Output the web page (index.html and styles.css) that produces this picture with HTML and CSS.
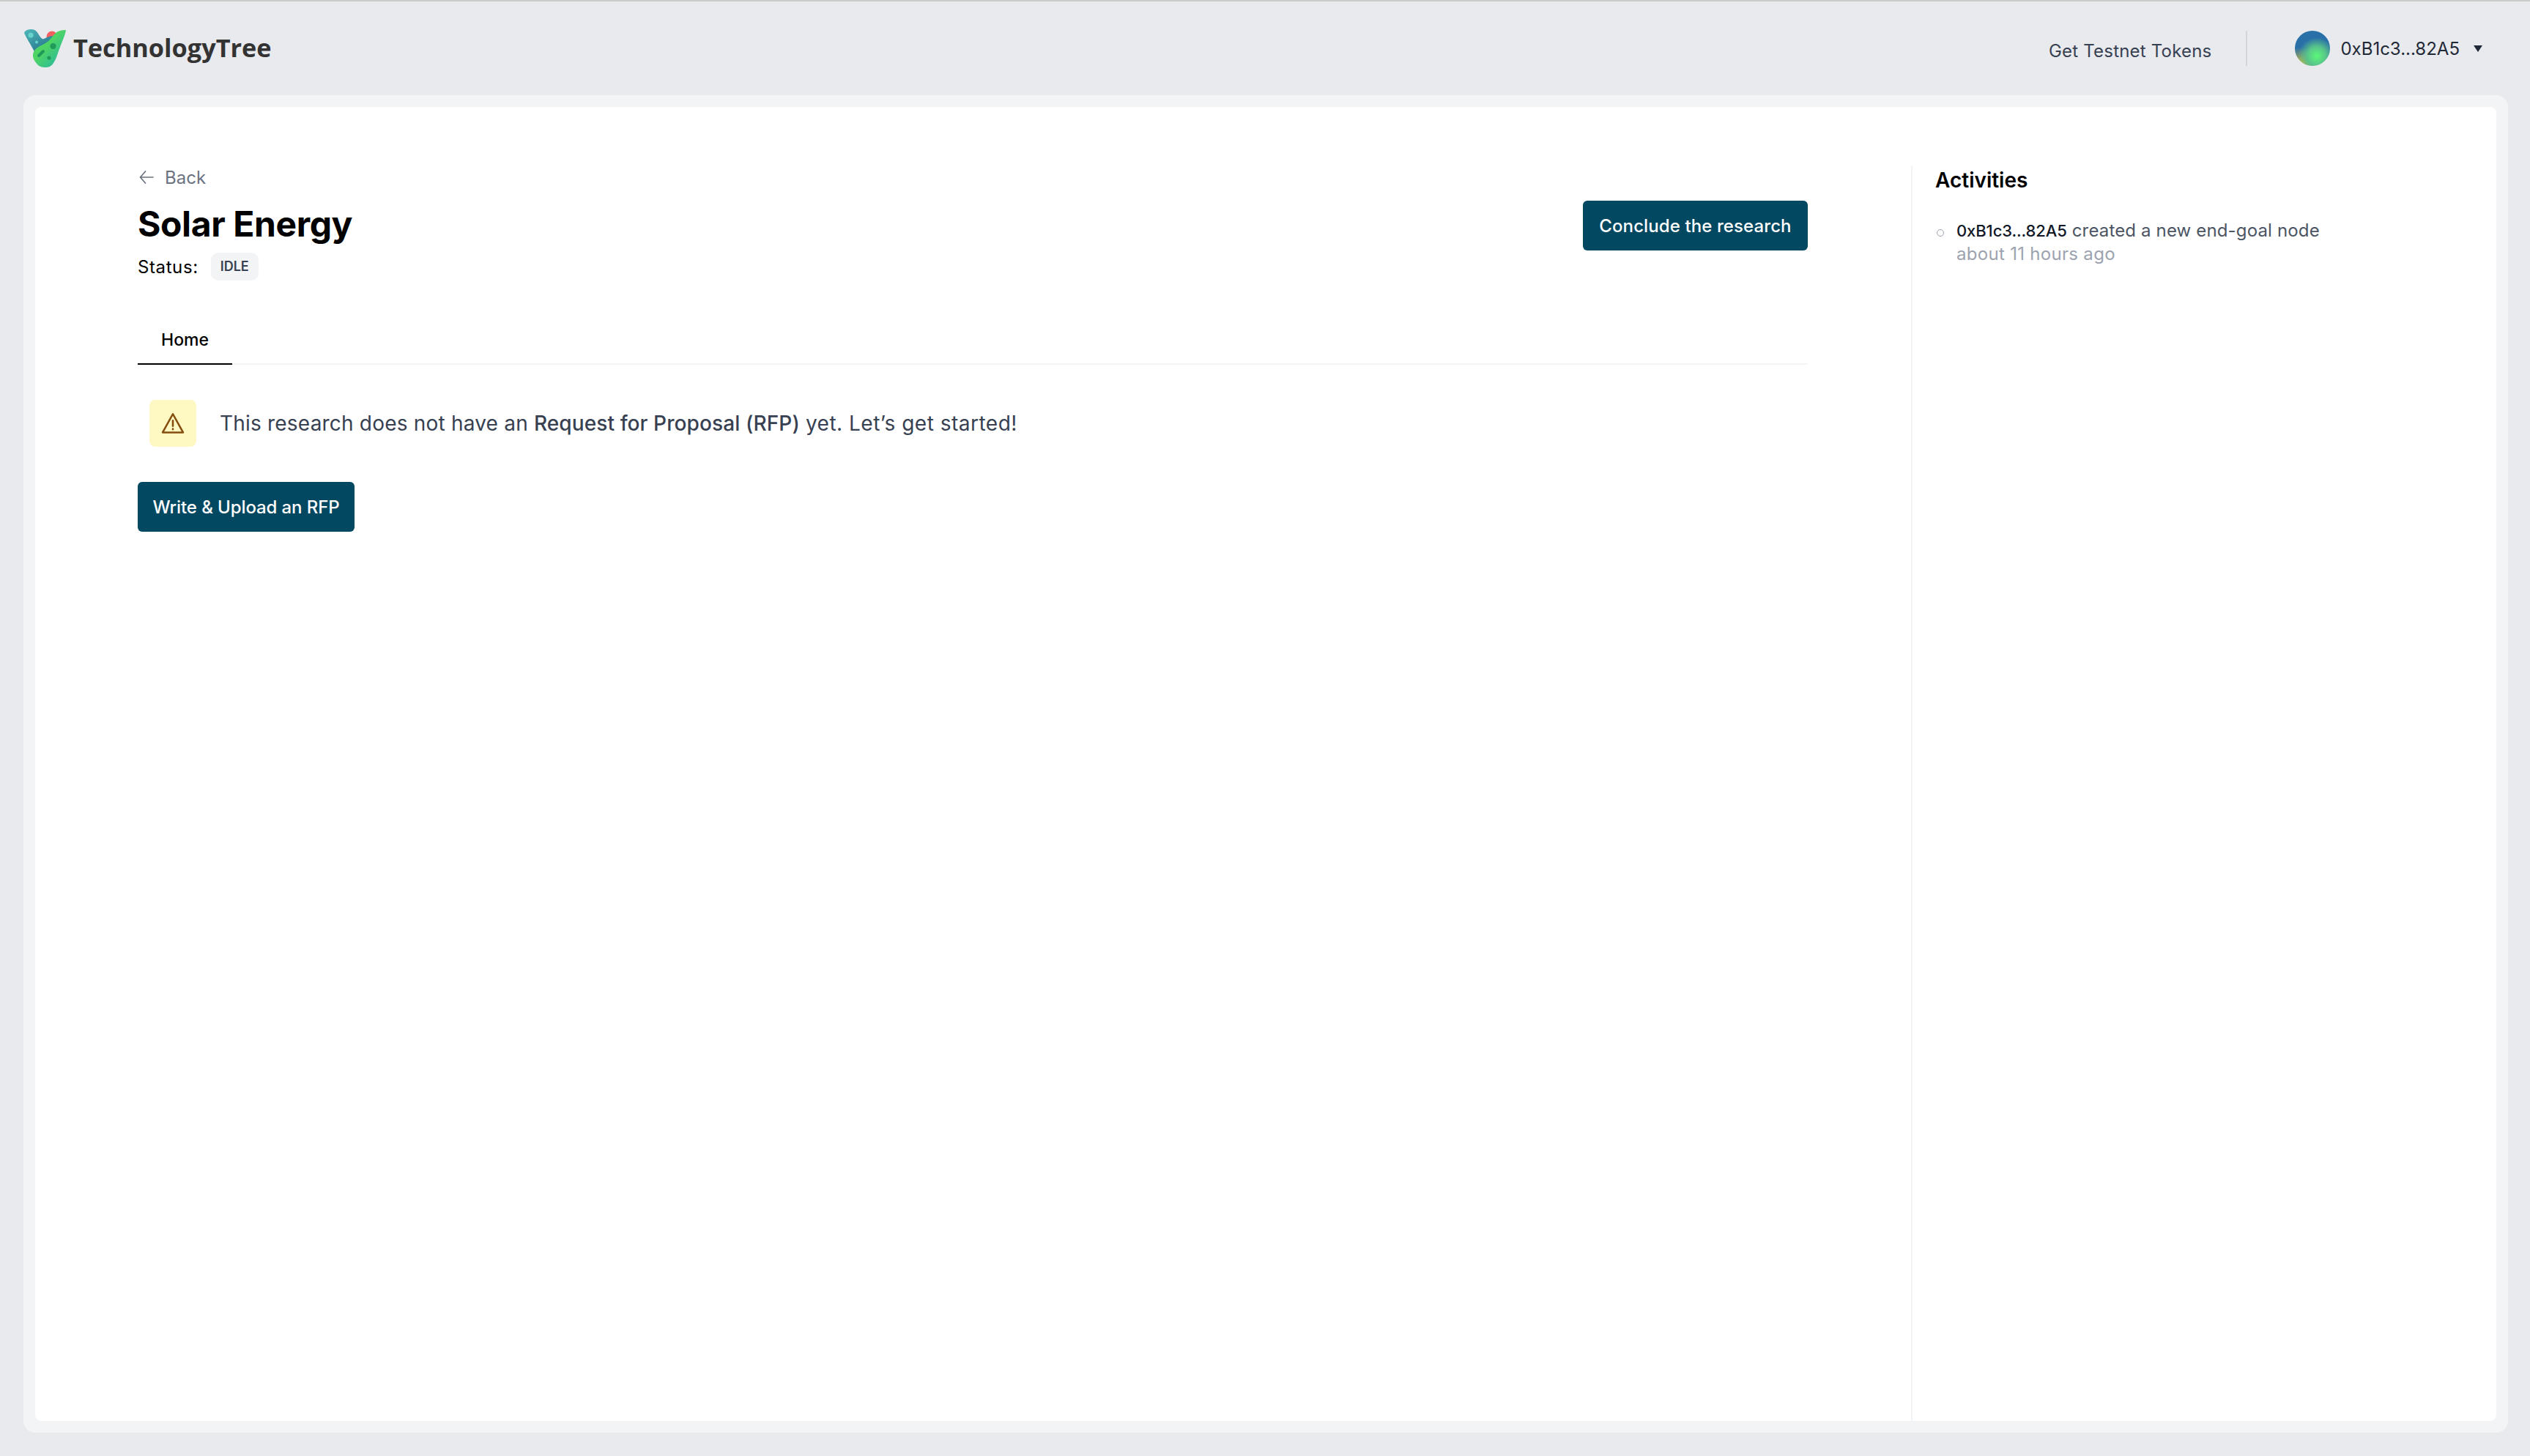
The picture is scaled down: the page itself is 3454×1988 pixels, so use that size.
FILE: index.html
```html
<!DOCTYPE html>
<html lang="en">
<head>
<meta charset="utf-8">
<title>TechnologyTree</title>
<link rel="stylesheet" href="styles.css">
</head>
<body>
<div class="app">
  <header class="topbar">
    <a class="brand">
      <svg class="logo" viewBox="0 0 58 52" aria-hidden="true">
        <defs>
          <linearGradient id="lg1" x1="0" y1="0" x2="0.6" y2="1">
            <stop offset="0" stop-color="#4fb8b8"/><stop offset="1" stop-color="#1f6a86"/>
          </linearGradient>
          <linearGradient id="lg2" x1="0.3" y1="0.55" x2="0.75" y2="1">
            <stop offset="0" stop-color="#4ed465"/><stop offset="1" stop-color="#27b8a0"/>
          </linearGradient>
        </defs>
        <circle cx="39" cy="10" r="7.5" fill="#f45f5f"/>
        <path d="M1 5C2 1 7 0 11 0c6 0 8 4 11 9 2 3 4 5 6 4 4-2 8-4 14-4l-6 26-18 5C17 30 8 20 1 5z" fill="url(#lg1)"/>
        <path d="M58 1c-1 7-5 15-9 26-3 8-4 13-8 19-3 5-7 6-12 6-6 0-10-3-13-8-3-4-4-9-2-13 2-5 8-8 14-11 8-4 10-9 15-14 4-4 9-5 15-5z" fill="url(#lg2)"/>
        <circle cx="10" cy="8" r="3.6" fill="#67d3cc"/>
        <circle cx="18" cy="17.500" r="2" fill="#67d3cc"/>
        <circle cx="40.500" cy="23" r="4" fill="#1f9a58"/>
        <circle cx="35" cy="39" r="2.600" fill="#1f9a58"/>
        <path d="M21 36l6-6" stroke="#1f9a58" stroke-width="4" stroke-linecap="round" fill="none"/>
      </svg>
      <span class="brand-name">TechnologyTree</span>
    </a>
    <nav class="account">
      <a class="faucet">Get Testnet Tokens</a>
      <span class="divider"></span>
      <span class="avatar"></span>
      <span class="address">0xB1c3...82A5</span>
      <span class="caret"></span>
    </nav>
  </header>

  <div class="panel">
    <div class="sheet">
      <main class="main">
        <a class="back">
          <svg class="back-icon" viewBox="0 0 24 24" aria-hidden="true"><path d="M10.500 4 3.500 12l7 8M4 12h17" fill="none" stroke="currentColor" stroke-width="1.700" stroke-linecap="round" stroke-linejoin="round"/></svg>
          <span>Back</span>
        </a>
        <div class="title-row">
          <div>
            <h1 class="title">Solar Energy</h1>
            <div class="status"><span>Status:</span><span class="badge">IDLE</span></div>
          </div>
          <button class="btn btn-conclude">Conclude the research</button>
        </div>
        <div class="tabs"><a class="tab">Home</a></div>
        <div class="notice">
          <span class="notice-icon">
            <svg viewBox="0 0 24 24" aria-hidden="true"><path d="M12 3.500 2.700 20.300h18.600zM12 9.500v5M12 17v.5" fill="none" stroke="#854d0e" stroke-width="1.700" stroke-linecap="round" stroke-linejoin="round"/></svg>
          </span>
          <p class="notice-text">This research does not have an <strong>Request for Proposal (RFP)</strong> <span class="notice-tail">yet. Let’s get started!</span></p>
        </div>
        <button class="btn btn-upload">Write &amp; Upload an RFP</button>
      </main>
      <aside class="side">
        <h2 class="side-title">Activities</h2>
        <ul class="feed">
          <li class="feed-item">
            <span class="dot"></span>
            <div>
              <div class="feed-line"><b class="feed-addr">0xB1c3...82A5</b> created a new end-goal node</div>
              <div class="feed-time">about 11 hours ago</div>
            </div>
          </li>
        </ul>
      </aside>
    </div>
  </div>
</div>
</body>
</html>
```

FILE: styles.css
```css
* { box-sizing: border-box; }
html, body { margin: 0; height: 100%; }
body { background: #e9eaee; font-family: Inter, "Liberation Sans", sans-serif; color: #000; }
.app { height: 1988px; display: flex; flex-direction: column; border-top: 2px solid #cacccb; }

.topbar { height: 128px; flex: none; display: flex; align-items: center; justify-content: space-between; padding: 0 65px 0 32px; }
.brand { display: flex; align-items: center; gap: 10px; }
.logo { width: 58px; height: 52px; display: block; }
.brand-name { font-family: "Open Sans", sans-serif; font-weight: 700; font-size: 34.300px; line-height: 44px; padding-bottom: 2px; color: #333; }
.account { display: flex; align-items: center; }
.faucet { font-size: 24px; letter-spacing: .2px; color: #374151; margin-right: 47px; padding-top: 6px; }
.divider { width: 2px; height: 48px; background: #d1d5db; margin-right: 65px; }
.avatar { width: 48px; height: 48px; border-radius: 50%; background: radial-gradient(circle at 62% 72%, #5cf77a 0, #58c58a 28%, transparent 55%), radial-gradient(circle at 15% 100%, #e0c930 0, transparent 40%), #2a70a8; margin-right: 14px; }
.address { font-size: 24px; color: #1f2937; margin-right: 19px; }
.caret { width: 0; height: 0; border-left: 6.500px solid transparent; border-right: 6.500px solid transparent; border-top: 9px solid #1f2937; }

.panel { flex: 1; margin: 0 30px 32px 32px; padding: 16px; background: #f3f4f6; border-radius: 16px; display: flex; }
.sheet { flex: 1; background: #fff; border-radius: 8px; display: flex; padding-left: 140px; }

.main { width: 2280px; padding-top: 80px; }
.back { display: flex; align-items: center; gap: 13px; height: 32px; font-size: 24px; color: #6b7280; }
.back-icon { width: 24px; height: 24px; }
.title-row { display: flex; justify-content: space-between; align-items: flex-start; margin-top: 16px; }
.title { margin: 2px 0 0; font-size: 48px; line-height: 60px; font-weight: 700; letter-spacing: -.4px; }
.status { display: flex; align-items: center; gap: 17px; font-size: 24px; letter-spacing: .6px; margin-top: 9px; height: 38px; }
.badge { font-size: 18px; font-weight: 600; letter-spacing: 0; color: #374151; background: #f3f4f6; border-radius: 10px; padding: 0 13px; line-height: 38px; }
.btn { border: 0; border-radius: 6px; background: #034861; color: #fff; font: 500 24px Inter, sans-serif; height: 68px; padding: 0; white-space: nowrap; }
.btn-conclude { width: 307px; letter-spacing: .1px; }
.tabs { margin-top: 55px; border-bottom: 2px solid #f3f4f6; height: 60px; display: flex; }
.tab { width: 129px; height: 60px; border-bottom: 2px solid #000; font-size: 23px; font-weight: 500; text-align: center; line-height: 52px; }
.notice { display: flex; align-items: center; gap: 32px; margin-top: 48px; padding-left: 16px; }
.notice-icon { width: 64px; height: 64px; border-radius: 8px; background: #fef9c3; display: flex; align-items: center; justify-content: center; }
.notice-icon svg { width: 36px; height: 36px; }
.notice-text { margin: 0; font-size: 28px; letter-spacing: .2px; color: #374151; }
.notice-text strong { font-weight: 500; letter-spacing: .1px; }
.notice-tail { letter-spacing: .5px; }
.btn-upload { margin-top: 48px; width: 296px; display: block; letter-spacing: -.1px; }

.side { flex: 1; margin: 80px 0 0 141px; border-left: 2px solid #f3f4f6; padding-left: 31px; }
.side-title { margin: 2px 0 0; font-size: 28px; font-weight: 600; line-height: 36px; }
.feed { list-style: none; margin: 35px 0 0; padding: 0; }
.feed-item { display: flex; gap: 17px; }
.dot { width: 10px; height: 10px; border: 1.500px solid #9ca3af; border-radius: 50%; margin: 14px 0 0 2px; flex: none; }
.feed-line { font-size: 24px; letter-spacing: .15px; line-height: 32px; color: #4b5563; }
.feed-addr { font-size: 22px; letter-spacing: -.1px; font-weight: 500; color: #111827; }
.feed-time { font-size: 24px; letter-spacing: .3px; line-height: 31px; color: #9ca3af; }
```
